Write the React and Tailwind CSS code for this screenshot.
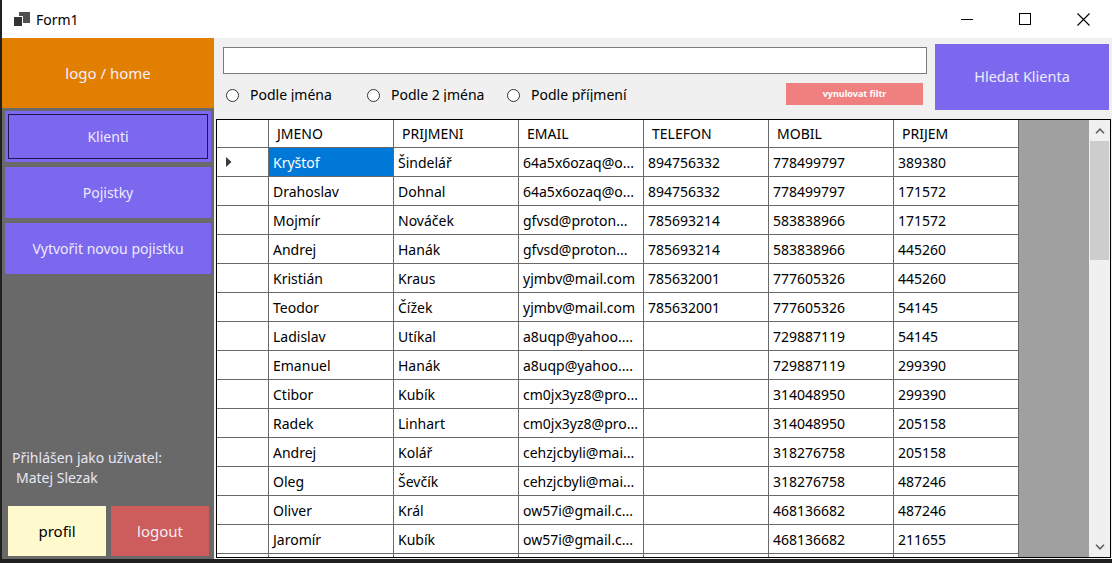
import React from "react";

const COLS = ["JMENO", "PRIJMENI", "EMAIL", "TELEFON", "MOBIL", "PRIJEM"];

const ROWS = [
  ["Kryštof", "Šindelář", "64a5x6ozaq@o...", "894756332", "778499797", "389380"],
  ["Drahoslav", "Dohnal", "64a5x6ozaq@o...", "894756332", "778499797", "171572"],
  ["Mojmír", "Nováček", "gfvsd@proton...", "785693214", "583838966", "171572"],
  ["Andrej", "Hanák", "gfvsd@proton...", "785693214", "583838966", "445260"],
  ["Kristián", "Kraus", "yjmbv@mail.com", "785632001", "777605326", "445260"],
  ["Teodor", "Čížek", "yjmbv@mail.com", "785632001", "777605326", "54145"],
  ["Ladislav", "Utíkal", "a8uqp@yahoo....", "", "729887119", "54145"],
  ["Emanuel", "Hanák", "a8uqp@yahoo....", "", "729887119", "299390"],
  ["Ctibor", "Kubík", "cm0jx3yz8@pro...", "", "314048950", "299390"],
  ["Radek", "Linhart", "cm0jx3yz8@pro...", "", "314048950", "205158"],
  ["Andrej", "Kolář", "cehzjcbyli@mai...", "", "318276758", "205158"],
  ["Oleg", "Ševčík", "cehzjcbyli@mai...", "", "318276758", "487246"],
  ["Oliver", "Král", "ow57i@gmail.c...", "", "468136682", "487246"],
  ["Jaromír", "Kubík", "ow57i@gmail.c...", "", "468136682", "211655"],
  ["", "", "", "", "", ""],
];

function Chevron({ down }) {
  return (
    <svg width="10" height="6" viewBox="0 0 10 6" className={down ? "rotate-180" : ""}>
      <path d="M1 5.2 L5 1.2 L9 5.2" fill="none" stroke="#606060" strokeWidth="1.6" />
    </svg>
  );
}

// label is clipped just under the baseline, like the WinForms control in the screenshot
function Radio({ label, width }) {
  return (
    <div className={`flex items-start ${width}`}>
      <span className="mt-[6px] ml-[3px] w-[13px] h-[13px] rounded-full border border-[#333] bg-white" />
      <span className="ml-[11px] mt-[2px] h-[17px] overflow-hidden text-[14px] leading-[20px] text-black">
        {label}
      </span>
    </div>
  );
}

function SideButton({ children, active }) {
  return (
    <div className="mx-[3px] h-[51px] bg-[#7b68ee] p-[3px]">
      <div
        className={`h-full flex items-center justify-center text-[14px] text-[#ecebfb] border ${
          active ? "border-[#1c1650]" : "border-transparent"
        }`}
      >
        {children}
      </div>
    </div>
  );
}

export default function App() {
  return (
    <div className="w-[1112px] h-[563px] bg-[#202020] pl-[2px] pb-[4px] flex flex-col font-['Noto_Sans',sans-serif]">
      {/* title bar */}
      <div className="h-[38px] bg-white flex items-center">
        <svg width="17" height="15" viewBox="0 0 17 15" className="ml-[11px]">
          <rect x="6" y="0" width="11" height="11" fill="#505050" />
          <rect x="0.5" y="4.5" width="9" height="10" fill="#333" stroke="#fff" />
        </svg>
        <span className="ml-[6px] text-[14px] text-black">Form1</span>
        <div className="ml-auto flex h-full">
          <div className="w-[58px] flex items-center justify-center">
            <div className="w-[12px] h-[1px] bg-black" />
          </div>
          <div className="w-[58px] flex items-center justify-center">
            <div className="w-[12px] h-[12px] border border-black" />
          </div>
          <div className="w-[58px] flex items-center justify-center">
            <svg width="13" height="13" viewBox="0 0 13 13">
              <path d="M0.5 0.5 L12.5 12.5 M12.5 0.5 L0.5 12.5" stroke="#000" strokeWidth="1.1" />
            </svg>
          </div>
        </div>
      </div>

      <div className="flex-1 flex bg-[#f0f0f0] min-h-0">
        {/* sidebar */}
        <div className="w-[212px] bg-[#696969] flex flex-col">
          <div className="h-[70px] bg-[#e27e00] flex items-center justify-center text-[15px] text-[#f4f0ff]">
            logo / home
          </div>
          <div className="mt-[3px] flex flex-col gap-[5px]">
            <SideButton active>Klienti</SideButton>
            <SideButton>Pojistky</SideButton>
            <SideButton>Vytvořit novou pojistku</SideButton>
          </div>
          <div className="flex-1" />
          <div className="pl-[10px] text-[14px] leading-[20px] text-[#e8e6f4]">
            <div>Přihlášen jako uživatel:</div>
            <div className="pl-[4px]">Matej Slezak</div>
          </div>
          <div className="mt-[18px] mb-[3px] ml-[6px] flex gap-[5px]">
            <div className="w-[98px] h-[50px] bg-[#fffacd] flex items-center justify-center text-[15px] text-black">
              profil
            </div>
            <div className="w-[98px] h-[50px] bg-[#cd5c5c] flex items-center justify-center text-[15px] text-[#f4eef6]">
              logout
            </div>
          </div>
        </div>

        {/* main */}
        <div className="flex-1 flex flex-col min-w-0">
          <div className="h-[81px] flex">
            <div className="w-[713px] pl-[9px] pt-[9px]">
              <div className="w-[704px] h-[27px] border border-[#7a7a7a] bg-white" />
              <div className="mt-[9px] flex items-start">
                <Radio label="Podle jména" width="w-[141px]" />
                <Radio label="Podle 2 jména" width="w-[140px]" />
                <Radio label="Podle příjmení" width="w-[140px]" />
                <div className="ml-auto mr-[4px] w-[137px] h-[22px] bg-[#f08080] flex items-center justify-center text-[9px] font-bold text-white">
                  vynulovat filtr
                </div>
              </div>
            </div>
            <div className="ml-[8px] mt-[6px] w-[174px] h-[66px] bg-[#7b68ee] flex items-center justify-center text-[14.5px] text-[#ecebfb]">
              Hledat Klienta
            </div>
          </div>

          {/* grid */}
          <div className="ml-[2px] mr-[1px] mb-[1px] flex-1 min-h-0 border border-black bg-[#a0a0a0] flex overflow-hidden">
            <div className="flex flex-col text-[14px] text-black">
              <div className="flex h-[28px] shrink-0 bg-white border-b border-[#696969]">
                <div className="w-[52px] border-r border-[#696969]" />
                {COLS.map((c) => (
                  <div key={c} className="w-[125px] border-r border-[#696969] flex items-center pl-[8px]">
                    {c}
                  </div>
                ))}
              </div>
              {ROWS.map((r, i) => (
                <div key={i} className="flex h-[29px] shrink-0 bg-white border-b border-[#696969]">
                  <div className="w-[52px] border-r border-[#696969] flex items-center pl-[9px]">
                    {i === 0 && (
                      <svg width="6" height="10" viewBox="0 0 6 10">
                        <path d="M0 0 L5.5 5 L0 10 Z" fill="#3a3a3a" />
                      </svg>
                    )}
                  </div>
                  {r.map((v, j) => (
                    <div
                      key={j}
                      className={`w-[125px] border-r border-[#696969] flex items-center pl-[4px] whitespace-nowrap overflow-hidden ${
                        i === 0 && j === 0 ? "bg-[#0078d7] text-white" : ""
                      }`}
                    >
                      {v}
                    </div>
                  ))}
                </div>
              ))}
            </div>
            <div className="flex-1" />
            <div className="w-[21px] bg-[#f0f0f0] flex flex-col">
              <div className="h-[21px] flex items-center justify-center">
                <Chevron />
              </div>
              <div className="mx-[1px] h-[119px] bg-[#cdcdcd]" />
              <div className="flex-1" />
              <div className="h-[21px] flex items-center justify-center">
                <Chevron down />
              </div>
            </div>
          </div>
        </div>
      </div>
    </div>
  );
}
